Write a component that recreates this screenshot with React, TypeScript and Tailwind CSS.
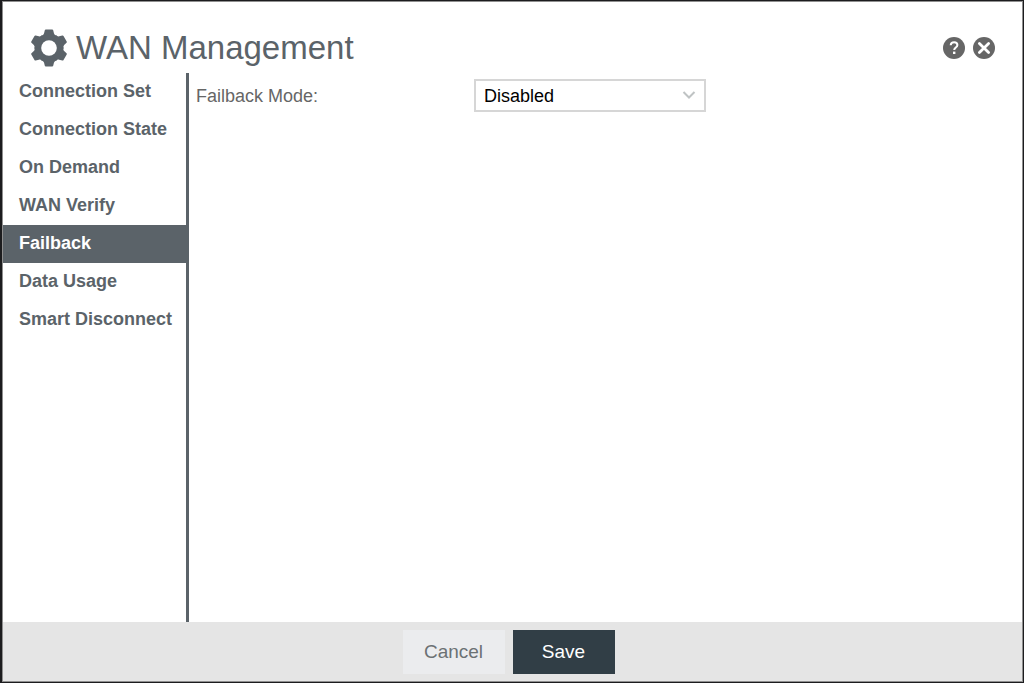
import { useState } from "react";

const sections = [
  "Connection Set",
  "Connection State",
  "On Demand",
  "WAN Verify",
  "Failback",
  "Data Usage",
  "Smart Disconnect",
];

function GearIcon() {
  return (
    <svg viewBox="0 0 38 38" className="size-[38px]" aria-hidden="true">
      <g fill="#5b6369">
        <circle cx="19" cy="19" r="13.8" />
        {[0, 60, 120, 180, 240, 300].map((angle) => (
          <path
            key={angle}
            transform={`rotate(${angle} 19 19)`}
            d="M15.8.4h6.400q.8 0 1 .8l.8 3.200q.5 1.600 2.800 2.300L19 14l-7.800-7.300q2.300-.7 2.800-2.300l.8-3.200q.2-.8 1-.8z"
          />
        ))}
      </g>
      <circle cx="19" cy="19" r="7.800" fill="#fff" />
    </svg>
  );
}

function HelpIcon() {
  return (
    <svg viewBox="0 0 22 22" className="size-[22px]" aria-hidden="true">
      <circle cx="11" cy="11" r="11" fill="#666" />
      <path
        d="M7.700 8.300c.1-1.900 1.500-3 3.400-3s3.300 1.100 3.300 2.800c0 2.500-3.200 2.400-3.200 5"
        fill="none"
        stroke="#fff"
        strokeWidth="2"
      />
      <rect x="10" y="14.600" width="2.400" height="2.400" fill="#fff" />
    </svg>
  );
}

function CloseIcon() {
  return (
    <svg viewBox="0 0 22 22" className="size-[22px]" aria-hidden="true">
      <circle cx="11" cy="11" r="11" fill="#666" />
      <path
        d="M6.400 6.400l9.200 9.200M15.600 6.400l-9.200 9.200"
        stroke="#fff"
        strokeWidth="2.800"
        strokeLinecap="round"
      />
    </svg>
  );
}

export default function App() {
  const [active, setActive] = useState("Failback");
  const [mode, setMode] = useState("Disabled");

  return (
    <div className="flex min-h-screen bg-[#1c1c1e] pt-px pr-px pb-px pl-[2px] font-['Liberation_Sans',Arial,sans-serif]">
      <div className="flex flex-1 flex-col border border-[#8f8f8f] bg-white">
        <header className="flex h-[71px] items-center justify-between px-[27px] pt-5">
          <h1 className="flex items-center gap-2 text-[33px] leading-[38px] text-[#5b6369]">
            <GearIcon />
            WAN Management
          </h1>
          <div className="flex gap-2">
            <button type="button" aria-label="Help">
              <HelpIcon />
            </button>
            <button type="button" aria-label="Close">
              <CloseIcon />
            </button>
          </div>
        </header>

        <div className="flex flex-1">
          <nav className="w-[186px] shrink-0 border-r-3 border-[#5b6369]">
            {sections.map((name) => (
              <button
                key={name}
                type="button"
                onClick={() => setActive(name)}
                className={`block h-[38px] w-full pb-0.5 pl-4 text-left text-[18px] font-bold whitespace-nowrap ${
                  name === active
                    ? "bg-[#5b6369] text-white"
                    : "text-[#5b6369]"
                }`}
              >
                {name}
              </button>
            ))}
          </nav>

          <main className="flex flex-1 items-start pt-1.5 pl-[7px]">
            <label
              htmlFor="failback-mode"
              className="w-[278px] text-[18px] leading-[35px] text-[#666]"
            >
              Failback Mode:
            </label>
            <div className="relative w-[232px]">
              <select
                id="failback-mode"
                value={mode}
                onChange={(e) => setMode(e.target.value)}
                className="h-[33px] w-full appearance-none border-2 border-[#d6d6d6] bg-white pt-0.5 pl-2 text-[18px] text-black"
              >
                <option>Disabled</option>
                <option>Immediate</option>
                <option>Time</option>
                <option>Usage</option>
              </select>
              <svg
                viewBox="0 0 14 8"
                className="pointer-events-none absolute top-3 right-2.5 h-2 w-3.5"
                aria-hidden="true"
              >
                <path
                  d="M1.500 1l5.500 5.500L12.500 1"
                  fill="none"
                  stroke="#bfc3c4"
                  strokeWidth="2"
                />
              </svg>
            </div>
          </main>
        </div>

        <footer className="flex h-[59px] items-center justify-center gap-2 bg-[#e5e5e5] pr-2">
          <button
            type="button"
            className="h-11 w-[102px] bg-[#ebecee] pt-0.5 text-[19px] text-[#6b7174]"
          >
            Cancel
          </button>
          <button
            type="button"
            className="h-11 w-[102px] bg-[#313e46] pt-0.5 text-[19px] text-white"
          >
            Save
          </button>
        </footer>
      </div>
    </div>
  );
}
